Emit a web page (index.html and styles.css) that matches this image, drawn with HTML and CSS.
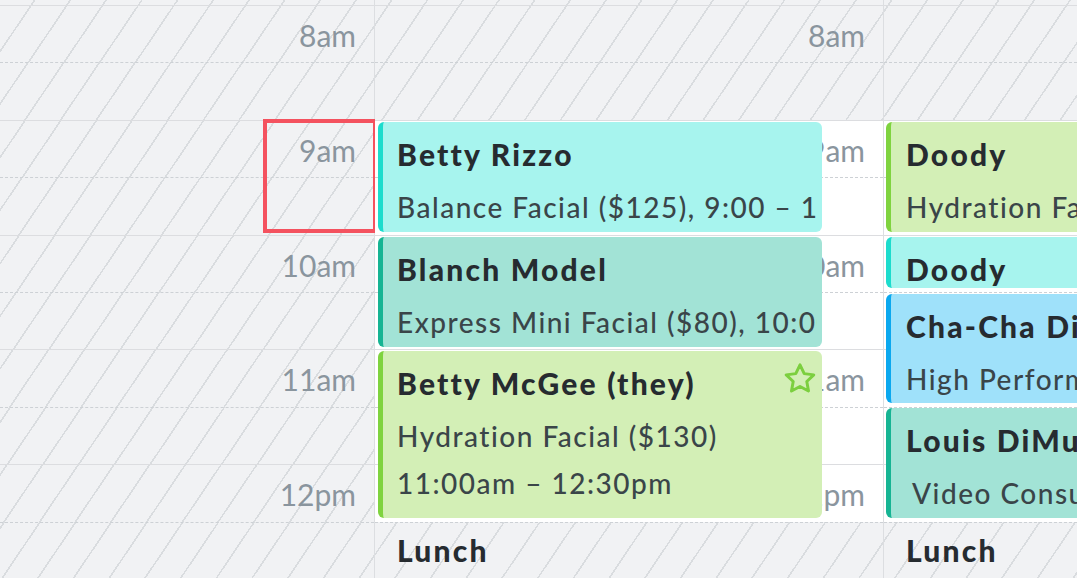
FILE: index.html
```html
<!DOCTYPE html>
<html>
<head>
<meta charset="utf-8">
<link rel="stylesheet" href="styles.css">
</head>
<body>
<div class="cal">
  <div class="col col-1">
    <div class="lead off"></div>
    <div class="half top off"><span class="label">8am</span></div>
    <div class="half bottom off"></div>
    <div class="half top off"><span class="label">9am</span></div>
    <div class="half bottom off"></div>
    <div class="half top off"><span class="label">10am</span></div>
    <div class="half bottom off"></div>
    <div class="half top off"><span class="label">11am</span></div>
    <div class="half bottom off"></div>
    <div class="half top off"><span class="label">12pm</span></div>
    <div class="half bottom off"></div>
    <div class="slot-select"></div>
  </div>

  <div class="col col-2">
    <div class="lead off"></div>
    <div class="half top off"><span class="label">8am</span></div>
    <div class="half bottom off"></div>
    <div class="half top on"><span class="label">9am</span></div>
    <div class="half bottom on"></div>
    <div class="half top on"><span class="label">10am</span></div>
    <div class="half bottom on"></div>
    <div class="half top on"><span class="label">11am</span></div>
    <div class="half bottom on"></div>
    <div class="half top on"><span class="label">12pm</span></div>
    <div class="half bottom off"></div>

    <div class="event cyan ev-rizzo">
      <div class="ev-inner">
        <div class="ev-title">Betty Rizzo</div>
        <div class="ev-sub">Balance Facial ($125), 9:00 – 10:00am</div>
      </div>
    </div>
    <div class="event teal ev-blanch">
      <div class="ev-inner">
        <div class="ev-title">Blanch Model</div>
        <div class="ev-sub">Express Mini Facial ($80), 10:00 – 11:00am</div>
      </div>
    </div>
    <div class="event green ev-mcgee">
      <div class="ev-inner">
        <div class="ev-title">Betty McGee (they)</div>
        <div class="ev-sub">Hydration Facial ($130)</div>
        <div class="ev-line">11:00am – 12:30pm</div>
      </div>
      <svg class="star" viewBox="1.8 2 20.4 19.2" width="32" height="30" aria-hidden="true">
        <path d="M12 3.2l2.7 5.6 6.1.8-4.45 4.25 1.1 6.05L12 17l-5.45 2.9 1.1-6.05L3.2 9.6l6.1-.8z" fill="none" stroke="#7ccf3f" stroke-width="1.9" stroke-linejoin="round"/>
      </svg>
    </div>
    <div class="lunch">Lunch</div>
  </div>

  <div class="col col-3">
    <div class="lead off"></div>
    <div class="half top off"></div>
    <div class="half bottom off"></div>
    <div class="half top on"></div>
    <div class="half bottom on"></div>
    <div class="half top on"></div>
    <div class="half bottom on"></div>
    <div class="half top on"></div>
    <div class="half bottom on"></div>
    <div class="half top on"></div>
    <div class="half bottom off"></div>

    <div class="event green ev-doody">
      <div class="ev-inner">
        <div class="ev-title">Doody</div>
        <div class="ev-sub">Hydration Facial ($130), 9:00 – 10:00am</div>
      </div>
    </div>
    <div class="event cyan ev-doody2">
      <div class="ev-inner">
        <div class="ev-title">Doody</div>
      </div>
    </div>
    <div class="event blue ev-chacha">
      <div class="ev-inner">
        <div class="ev-title">Cha-Cha DiGregorio</div>
        <div class="ev-sub">High Performance Facial ($150)</div>
      </div>
    </div>
    <div class="event teal ev-louis">
      <div class="ev-inner">
        <div class="ev-title">Louis DiMucci</div>
        <div class="ev-sub ev-indent">Video Consultation</div>
      </div>
    </div>
    <div class="lunch">Lunch</div>
  </div>
</div>
</body>
</html>
```

FILE: styles.css
```css
html, body {
  margin: 0;
  padding: 0;
}

body {
  width: 1077px;
  height: 578px;
  overflow: hidden;
  background: #f1f2f4;
  font-family: "Lato", "Noto Sans", sans-serif;
}

.cal {
  display: flex;
  height: 578px;
}

.col {
  position: relative;
  display: flex;
  flex-direction: column;
  box-sizing: border-box;
  flex: none;
  border-right: 1.5px solid #dcdee1;
}

.col-1 { width: 375px; }
.col-2 { width: 509px; }
.col-3 { flex: 1; border-right: none; }

.off {
  background-color: #f1f2f4;
  background-image: repeating-linear-gradient(124deg, #f1f2f4 0 28px, #d9dcdf 28px 29.6px);
  background-attachment: fixed;
}

.on {
  background: #ffffff;
}

.lead {
  height: 5px;
  flex: none;
}

.half {
  height: 57.4px;
  flex: none;
  box-sizing: border-box;
  display: flex;
  justify-content: flex-end;
}

.half.top {
  border-top: 1.5px solid #dcdde0;
}

.half.bottom {
  border-top: 1px dashed #cdd1d5;
}

.label {
  font-size: 30px;
  line-height: 40px;
  padding-top: 9px;
  padding-right: 18px;
  color: #8a959e;
}

.slot-select {
  position: absolute;
  left: 263px;
  top: 119px;
  width: 114px;
  height: 114px;
  box-sizing: border-box;
  border: 4px solid #f4525f;
}

.event {
  position: absolute;
  box-sizing: border-box;
  border-radius: 6px;
  border-left: 5px solid;
  padding: 12px 5px 0 14px;
  color: #262b30;
  overflow: hidden;
}

.col-2 .event { left: 3px; width: 444px; }
.col-3 .event { left: 2px; right: -400px; padding-left: 15px; }

.ev-inner {
  overflow: hidden;
  white-space: nowrap;
}

.ev-title {
  font-size: 30px;
  font-weight: 900;
  letter-spacing: 2.2px;
  line-height: 40px;
  margin-bottom: 10px;
}

.ev-doody2 .ev-title { margin-bottom: 0; }

.ev-sub, .ev-line {
  font-size: 28px;
  font-weight: 500;
  letter-spacing: 1.5px;
  line-height: 47px;
  color: #3a4549;
}

.ev-indent { padding-left: 6px; }

.cyan  { background: #a7f4ee; border-left-color: #1cdccd; }
.teal  { background: #a2e3d6; border-left-color: #16b493; }
.green { background: #d3efb6; border-left-color: #7fd33f; }
.blue  { background: #9fe1fa; border-left-color: #0aa8ef; }

.ev-rizzo  { top: 122px; height: 110px; }
.ev-blanch { top: 237px; height: 110px; }
.ev-mcgee  { top: 351px; height: 167px; }

.ev-doody  { top: 122px; height: 110px; }
.ev-doody2 { top: 237px; height: 51px; }
.ev-chacha { top: 294px; height: 109px; }
.ev-louis  { top: 408px; height: 110px; }

.star {
  position: absolute;
  right: 6px;
  top: 12px;
}

.lunch {
  position: absolute;
  top: 522px;
  left: 22px;
  font-size: 30px;
  font-weight: 900;
  letter-spacing: 2.2px;
  line-height: 40px;
  padding-top: 8px;
  color: #262b30;
}
```
